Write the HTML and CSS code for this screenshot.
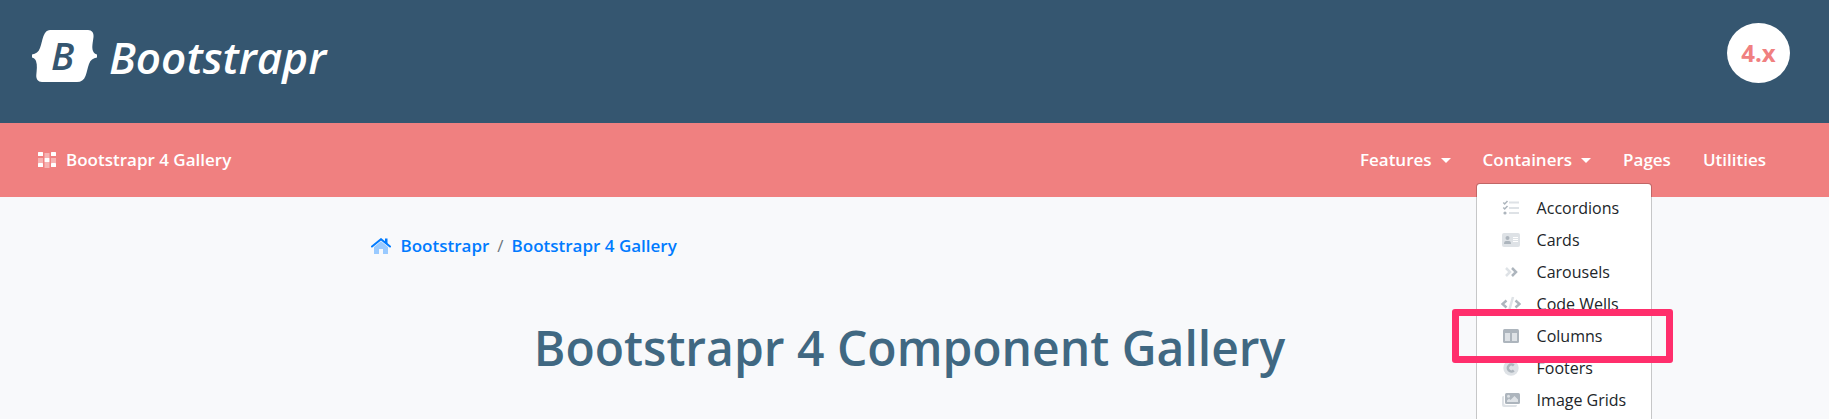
FILE: index.html
```html
<!DOCTYPE html>
<html lang="en">
<head>
<meta charset="utf-8">
<title>Bootstrapr 4 Component Gallery</title>
<link rel="stylesheet" href="styles.css">
</head>
<body>
<header class="masthead">
  <a class="logo" href="#">
    <svg class="logo-mark" viewBox="0 0 65 52" aria-hidden="true">
      <path fill="#fff" d="M18 0H56C60 0 62 3 61.500 7C61 12 59.500 17 61 21C61.700 23 63 24 65 24.500V27.500C61 28 58.500 30 57 34C55.500 38 55 42 53.500 46C52 50 49 52 45 52H10C6 52 4 49 4.300 45C4.700 40 5.500 35 4 31C3.300 29 2 28 0 27.500V24.500C4 24 6.500 22 8 18C9.500 14 10 10 11.500 6C13 2 15 0 18 0Z"/>
      <text class="logo-letter" x="19" y="40">B</text>
    </svg>
    <span class="logo-name">Bootstrapr</span>
  </a>
  <span class="version">4.x</span>
</header>
<nav class="navbar">
  <a class="brand" href="#">
    <svg class="brand-icon" viewBox="0 0 18 16" aria-hidden="true">
      <g fill="#fff"><rect width="5" height="4" rx=".5"/><rect x="13" width="5" height="4" rx=".5"/><rect x="6.500" y="6" width="5" height="4" rx=".5"/><rect y="11" width="5" height="4" rx=".5"/><rect x="13" y="11" width="5" height="4" rx=".5"/></g>
      <g fill="#fff" opacity=".4"><rect x="6.500" y="1" width="5" height="5"/><rect y="6" width="5" height="5"/><rect x="13" y="6" width="5" height="5"/><rect x="6.500" y="10" width="5" height="6"/></g>
    </svg>
    Bootstrapr 4 Gallery
  </a>
  <ul class="nav-list">
    <li class="nav-item"><a class="nav-link has-menu" href="#">Features</a></li>
    <li class="nav-item">
      <a class="nav-link has-menu" href="#">Containers</a>
      <ul class="menu">
        <li class="menu-item"><a class="menu-link" href="#">
          <svg class="menu-icon" viewBox="0 0 20 16" aria-hidden="true"><path class="soft" d="M8 1.500H18V3.500H8ZM8 7H18V9H8ZM8 12H18V14H8Z"/><path class="line" d="M2.300 2.500L3.700 4L6.500 1M2.300 7.500L3.700 9L6.500 6"/><circle class="dark" cx="4" cy="13" r="1.600"/></svg>
          Accordions</a></li>
        <li class="menu-item"><a class="menu-link" href="#">
          <svg class="menu-icon" viewBox="0 0 20 16" aria-hidden="true"><rect class="soft" x="1" y="1" width="18" height="14" rx="2"/><circle class="dark" cx="6.500" cy="6" r="2"/><path class="dark" d="M3 12Q3 9 5 9H8Q10 9 10 12Z"/><path fill="#fff" d="M12 5H17V6H12ZM12 7H17V8H12ZM12 9H17V10H12Z"/></svg>
          Cards</a></li>
        <li class="menu-item"><a class="menu-link" href="#">
          <svg class="menu-icon" viewBox="0 0 20 16" aria-hidden="true"><path class="stroke-soft" d="M5 4L9 8L5 12"/><path class="stroke-dark" d="M11 4L15 8L11 12"/></svg>
          Carousels</a></li>
        <li class="menu-item"><a class="menu-link" href="#">
          <svg class="menu-icon" viewBox="0 0 20 16" aria-hidden="true"><path class="stroke-soft" d="M12 1L8 15"/><path class="stroke-dark" d="M5.500 4.500L1.500 8L5.500 11.500M14.500 4.500L18.500 8L14.500 11.500"/></svg>
          Code Wells</a></li>
        <li class="menu-item selected"><a class="menu-link" href="#">
          <svg class="menu-icon" viewBox="0 0 20 16" aria-hidden="true"><rect class="dark" x="2" y="1" width="16" height="14" rx="1.500"/><path class="soft" d="M4 5H9V13H4ZM11 5H16V13H11Z"/></svg>
          Columns</a></li>
        <li class="menu-item"><a class="menu-link" href="#">
          <svg class="menu-icon" viewBox="0 0 20 16" aria-hidden="true"><circle class="soft" cx="10" cy="8" r="7.700"/><path class="stroke-dark" d="M12.800 5.500A3.500 3.500 0 1 0 12.800 10.500"/></svg>
          Footers</a></li>
        <li class="menu-item"><a class="menu-link" href="#">
          <svg class="menu-icon" viewBox="0 0 20 16" aria-hidden="true"><path class="soft" d="M1 5Q1 4 3 4V11Q3 13 5 13H16Q16 15 14.500 15H3Q1 15 1 13Z"/><rect class="dark" x="4" y="1" width="15" height="11" rx="1.500"/><circle class="soft" cx="7.500" cy="4.200" r="1.500"/><path class="soft" d="M6 10V8.500L8 6.500L9.500 8L13.500 4L17 7.500V10Z"/></svg>
          Image Grids</a></li>
      </ul>
    </li>
    <li class="nav-item"><a class="nav-link" href="#">Pages</a></li>
    <li class="nav-item"><a class="nav-link" href="#">Utilities</a></li>
  </ul>
</nav>
<main class="container">
  <nav aria-label="Breadcrumb">
    <ol class="breadcrumb">
      <li class="crumb"><a class="crumb-link" href="#">
        <svg class="home-icon" viewBox="0 0 20 16" aria-hidden="true"><path fill="#99caff" d="M3 9L10 3.200L17 9V16H12V11H8V16H3Z"/><path fill="none" stroke="#007bff" stroke-width="2" stroke-linecap="round" d="M1 8.500L10 1.200L19 8.500"/><path fill="#007bff" d="M14 .500H16.500V6L14 4Z"/></svg>
        Bootstrapr</a></li>
      <li class="crumb"><a class="crumb-link" href="#">Bootstrapr 4 Gallery</a></li>
    </ol>
  </nav>
  <h1 class="title">Bootstrapr 4 Component Gallery</h1>
</main>
</body>
</html>
```
FILE: styles.css
```css
* { box-sizing: border-box; }
html { overflow: hidden; }
body {
  min-height: 100vh;
  margin: 0;
  background: #f8f9fb;
  color: #212529;
  font-family: "Open Sans", sans-serif;
  font-size: 17px;
  line-height: 26px;
}
a { color: inherit; text-decoration: none; }
ul, ol { list-style: none; margin: 0; padding: 0; }

.masthead {
  display: flex;
  justify-content: space-between;
  align-items: flex-start;
  padding: 23px 39px 32px 32px;
  background: #355670;
}
.logo { display: flex; align-items: center; gap: 12px; color: #fff; }
.logo-mark { width: 65px; height: 52px; margin-bottom: 2px; }
.logo-letter { fill: #355670; font-size: 38px; font-style: italic; font-weight: 600; }
.logo-name { font-size: 44px; font-style: italic; font-weight: 600; line-height: 68px; }
.version {
  display: flex;
  align-items: center;
  justify-content: center;
  width: 63px;
  height: 60px;
  border-radius: 50%;
  background: #fff;
  color: #f08080;
  font-size: 24px;
  font-weight: 700;
}

.navbar {
  display: flex;
  justify-content: space-between;
  align-items: center;
  padding: 16px 47px 16px 38px;
  background: #f08080;
  color: #fff;
  font-weight: 600;
}
.brand { display: flex; align-items: center; gap: 10px; }
.brand-icon { width: 18px; height: 16px; }
.nav-list { display: flex; }
.nav-item { position: relative; }
.nav-link { display: flex; align-items: center; padding: 8px 16px; }
.has-menu::after {
  content: "";
  margin-left: 9px;
  border: 5px solid transparent;
  border-top-color: #fff;
  border-bottom: 0;
}

.menu {
  position: absolute;
  top: calc(100% + 2px);
  left: 9px;
  z-index: 10;
  min-width: 176px;
  padding: 8px 0;
  border: 1px solid rgba(0, 0, 0, .2);
  border-radius: 4px;
  background: #fff;
  background-clip: padding-box;
  color: #212529;
  font-size: 16px;
  font-weight: 400;
  line-height: 24px;
}
.menu-item { position: relative; }
.menu-link { display: flex; align-items: center; gap: 16px; padding: 4px 24px; white-space: nowrap; }
.selected::after {
  content: "";
  position: absolute;
  inset: -11px -22px -11px -25px;
  z-index: 1;
  border: 7px solid #ff2e6c;
  border-radius: 3px;
  pointer-events: none;
}
.menu-icon { width: 20px; height: 16px; }
.soft { fill: #dee2e6; }
.dark { fill: #adb5bd; }
.line { fill: none; stroke: #adb5bd; stroke-width: 1.500; }
.stroke-soft { fill: none; stroke: #dee2e6; stroke-width: 2.500; }
.stroke-dark { fill: none; stroke: #adb5bd; stroke-width: 2.500; }

.container { max-width: 1140px; margin: 0 auto; padding: 24px 15px; }
.breadcrumb {
  display: flex;
  padding: 12px 11px;
  color: #007bff;
  font-weight: 600;
}
.crumb, .crumb-link { display: flex; align-items: center; }
.crumb-link { gap: 10px; }
.crumb + .crumb::before { content: "/"; padding: 0 8px; color: #6c757d; font-weight: 400; }
.home-icon { width: 20px; height: 16px; }
.title {
  margin: 48px 0 0;
  padding-right: 10px;
  color: #406882;
  font-size: 48px;
  font-weight: 600;
  line-height: 58px;
  text-align: center;
}
```
